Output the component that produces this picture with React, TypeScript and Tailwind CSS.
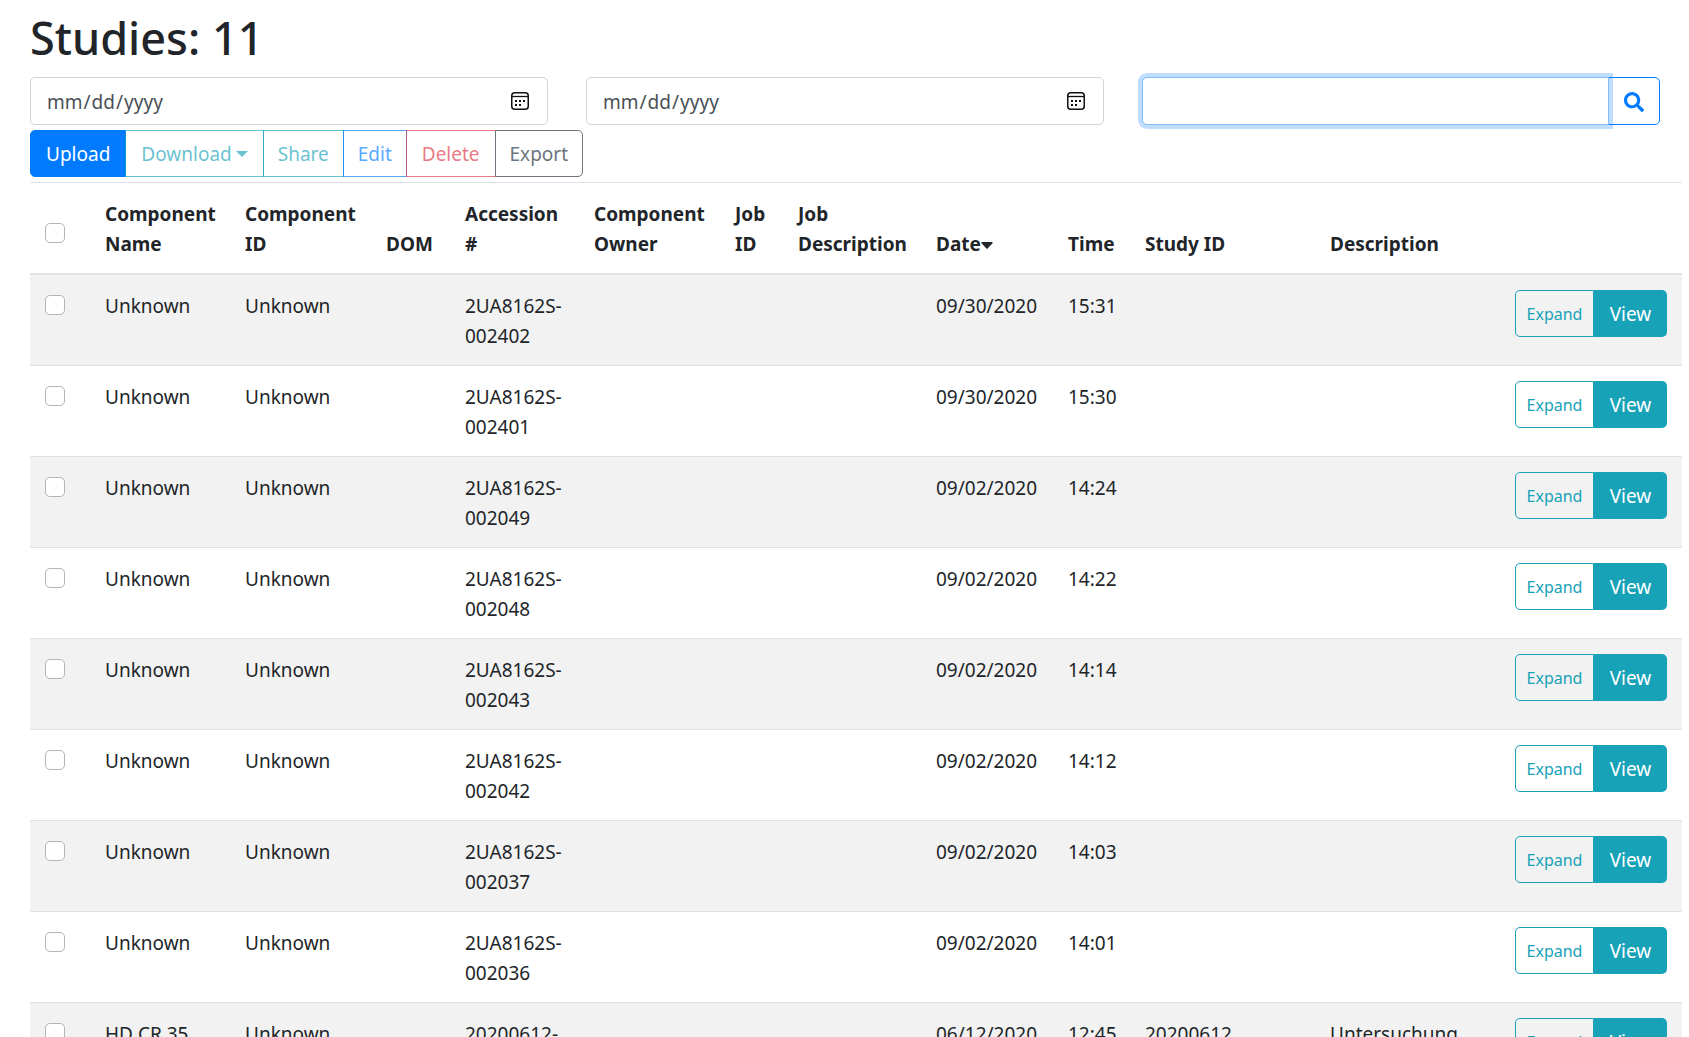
import React, { useState } from 'react'
import { FaSearch } from 'react-icons/fa'

type Study = {
    id: number
    name: string
    componentId: string
    accession: string
    date: string
    time: string
    studyId?: string
    description?: string
}

const studies: Study[] = [
    { id: 1, name: "Unknown", componentId: "Unknown", accession: "2UA8162S-002402", date: "09/30/2020", time: "15:31" },
    { id: 2, name: "Unknown", componentId: "Unknown", accession: "2UA8162S-002401", date: "09/30/2020", time: "15:30" },
    { id: 3, name: "Unknown", componentId: "Unknown", accession: "2UA8162S-002049", date: "09/02/2020", time: "14:24" },
    { id: 4, name: "Unknown", componentId: "Unknown", accession: "2UA8162S-002048", date: "09/02/2020", time: "14:22" },
    { id: 5, name: "Unknown", componentId: "Unknown", accession: "2UA8162S-002043", date: "09/02/2020", time: "14:14" },
    { id: 6, name: "Unknown", componentId: "Unknown", accession: "2UA8162S-002042", date: "09/02/2020", time: "14:12" },
    { id: 7, name: "Unknown", componentId: "Unknown", accession: "2UA8162S-002037", date: "09/02/2020", time: "14:03" },
    { id: 8, name: "Unknown", componentId: "Unknown", accession: "2UA8162S-002036", date: "09/02/2020", time: "14:01" },
    { id: 9, name: "HD CR 35", componentId: "Unknown", accession: "20200612-", date: "06/12/2020", time: "12:45", studyId: "20200612", description: "Untersuchung" },
]

const th = "px-[15px] pt-4 pb-[14px] align-bottom text-left font-bold"
const td = "px-[15px] pt-4 pb-[14px] align-top"
const controlTd = "p-[15px] align-top"
const btn = "relative h-[47px] border text-center whitespace-nowrap"

function CalendarIcon() {
    return (
        <svg className="pointer-events-none absolute right-[19px] top-[15px] h-[18px] w-[18px]" viewBox="0 0 18 18" fill="none" stroke="#111" aria-hidden="true">
            <rect x="0.75" y="0.75" width="16.5" height="16.5" rx="3" strokeWidth="1.5" />
            <path d="M1 4.5h16" strokeWidth="1.3" />
            <path d="M4 9h2M8 9h2M12 9h2M4 13h2M8 13h2" strokeWidth="2" />
        </svg>
    )
}

function SortCaret() {
    return (
        <svg className="inline-block h-[7px] w-3" viewBox="0 0 12 7" fill="currentColor" aria-hidden="true">
            <path d="M1 0h10a.7.7 0 0 1 .5 1.2L6.6 6.6a.9.9 0 0 1-1.2 0L.5 1.2A.7.7 0 0 1 1 0z" />
        </svg>
    )
}

function DateField({ label }: { label: string }) {
    const [value, setValue] = useState("")

    return (
        <div className="relative">
            <input
                type="date"
                aria-label={label}
                value={value}
                onChange={e => setValue(e.target.value)}
                className="block h-12 w-full rounded-[5px] border border-[#ced4da] bg-white px-[15px] pt-[2px] text-[#495057] [&::-webkit-calendar-picker-indicator]:opacity-0"
            />
            <CalendarIcon />
        </div>
    )
}

function Checkbox({ label, checked, onChange }: { label: string, checked: boolean, onChange: () => void }) {
    return (
        <input
            type="checkbox"
            aria-label={label}
            checked={checked}
            onChange={onChange}
            className="mt-[5px] block h-5 w-5 appearance-none rounded-[5px] border border-[#adb5bd] bg-white checked:border-[#007bff] checked:bg-[#007bff]"
        />
    )
}

export default function App() {
    const [selected, setSelected] = useState<number[]>([])
    const [search, setSearch] = useState("")

    const toggle = (id: number) => {
        setSelected(selected.includes(id) ? selected.filter(s => s !== id) : [...selected, id])
    }
    const allSelected = selected.length === studies.length
    const toggleAll = () => setSelected(allSelected ? [] : studies.map(s => s.id))

    return (
        <div className="h-screen overflow-y-auto bg-white pl-[30px] pr-[7px] font-['Noto_Sans',sans-serif] text-[19px] leading-[30px] text-[#212529] [scrollbar-width:none]">
            <h1 className="pt-2 pb-[9px] text-[45px] leading-[60px] font-medium">Studies: 11</h1>

            <div className="mr-[22px] grid grid-cols-3 gap-[38px]">
                <DateField label="From date" />
                <DateField label="To date" />
                <div className="flex">
                    <input
                        type="text"
                        aria-label="Search studies"
                        value={search}
                        onChange={e => setSearch(e.target.value)}
                        className="relative z-10 h-12 min-w-0 flex-1 rounded-l-[5px] border border-[#80bdff] bg-white px-4 text-[#495057] shadow-[0_0_0_4px_rgba(0,123,255,0.25)] outline-none"
                    />
                    <button aria-label="Search" className="-ml-px flex h-12 w-[52px] items-center justify-center rounded-r-[5px] border border-[#007bff] pt-px text-[#007bff]">
                        <FaSearch size={20} />
                    </button>
                </div>
            </div>

            <div className="mt-[5px] mb-[5px] flex">
                <button className={`${btn} rounded-l-[5px] border-[#007bff] bg-[#007bff] px-[15px] text-white`}>Upload</button>
                <button className={`${btn} -ml-px flex items-center gap-1 border-[#17a2b8] px-[15px] text-[#17a2b8] opacity-65`}>
                    Download
                    <span className="border-x-[6px] border-t-[6px] border-x-transparent" />
                </button>
                <button className={`${btn} -ml-px border-[#17a2b8] px-[14px] text-[#17a2b8] opacity-65`}>Share</button>
                <button className={`${btn} -ml-px border-[#007bff] px-[14px] text-[#007bff] opacity-65`}>Edit</button>
                <button className={`${btn} -ml-px border-[#dc3545] px-[15px] text-[#dc3545] opacity-65`}>Delete</button>
                <button className={`${btn} -ml-px rounded-r-[5px] border-[#6c757d] px-[14px] text-[#6c757d]`}>Export</button>
            </div>

            <table className="w-full table-fixed border-separate border-spacing-0">
                <colgroup>
                    <col className="w-[60px]" />
                    <col className="w-[140px]" />
                    <col className="w-[141px]" />
                    <col className="w-[79px]" />
                    <col className="w-[129px]" />
                    <col className="w-[141px]" />
                    <col className="w-[63px]" />
                    <col className="w-[138px]" />
                    <col className="w-[132px]" />
                    <col className="w-[77px]" />
                    <col className="w-[185px]" />
                    <col />
                    <col className="w-[182px]" />
                </colgroup>
                <thead>
                    <tr className="[&>th]:border-t [&>th]:border-b-2 [&>th]:border-[#dee2e6]">
                        <th className="px-[15px] pb-[30px] align-bottom">
                            <Checkbox label="Select all studies" checked={allSelected} onChange={toggleAll} />
                        </th>
                        <th className={th}>Component Name</th>
                        <th className={th}>Component ID</th>
                        <th className={th}>DOM</th>
                        <th className={th}>Accession #</th>
                        <th className={th}>Component Owner</th>
                        <th className={th}>Job ID</th>
                        <th className={th}>Job Description</th>
                        <th className={`${th} whitespace-nowrap`}>Date<SortCaret /></th>
                        <th className={th}>Time</th>
                        <th className={th}>Study ID</th>
                        <th className={th}>Description</th>
                        <th className={th} />
                    </tr>
                </thead>
                <tbody>
                    {studies.map(study => (
                        <tr key={study.id} className="odd:bg-[#f2f2f2] [&+tr>td]:border-t [&+tr>td]:border-[#dee2e6]">
                            <td className={controlTd}>
                                <Checkbox label={`Select study ${study.accession}`} checked={selected.includes(study.id)} onChange={() => toggle(study.id)} />
                            </td>
                            <td className={td}>{study.name}</td>
                            <td className={td}>{study.componentId}</td>
                            <td className={td} />
                            <td className={td}>{study.accession}</td>
                            <td className={td} />
                            <td className={td} />
                            <td className={td} />
                            <td className={td}>{study.date}</td>
                            <td className={`${td} whitespace-nowrap`}>{study.time}</td>
                            <td className={td}>{study.studyId}</td>
                            <td className={td}>{study.description}</td>
                            <td className={controlTd}>
                                <div className="flex">
                                    <button className="h-[47px] flex-1 rounded-l-[5px] border border-[#17a2b8] text-base text-[#17a2b8]">Expand</button>
                                    <button className="h-[47px] w-[73px] rounded-r-[5px] bg-[#17a2b8] text-white">View</button>
                                </div>
                            </td>
                        </tr>
                    ))}
                </tbody>
            </table>
        </div>
    )
}
